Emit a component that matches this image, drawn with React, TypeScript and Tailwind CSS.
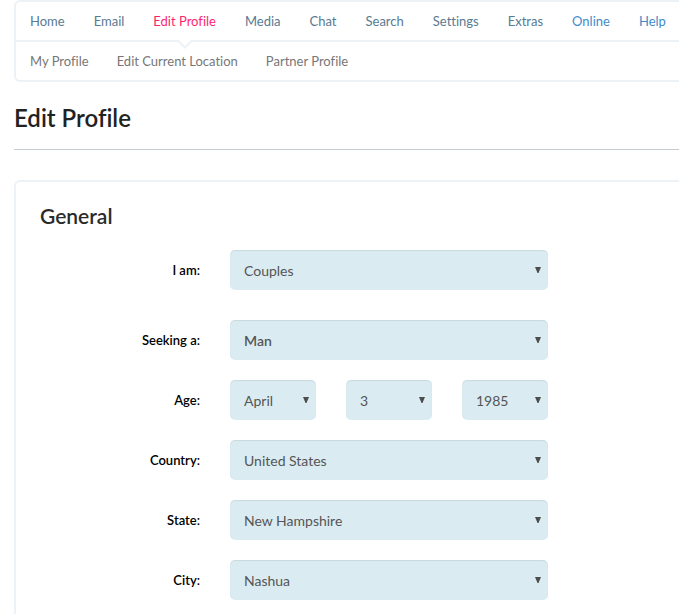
import { clsx } from "clsx";

const mainLinks = [
  { label: "Home", color: "text-[#587a92]" },
  { label: "Email", color: "text-[#587a92]" },
  { label: "Edit Profile", color: "text-[#ff1f71]", active: true },
  { label: "Media", color: "text-[#587a92]" },
  { label: "Chat", color: "text-[#587a92]" },
  { label: "Search", color: "text-[#587a92]" },
  { label: "Settings", color: "text-[#587a92]" },
  { label: "Extras", color: "text-[#587a92]" },
  { label: "Online", color: "text-[#428bca]" },
  { label: "Help", color: "text-[#428bca]" },
];

const subLinks = ["My Profile", "Edit Current Location", "Partner Profile"];

const locationFields = [
  { id: "country", label: "Country:", options: ["United States", "Canada"] },
  { id: "state", label: "State:", options: ["New Hampshire", "Vermont", "Maine"] },
  { id: "city", label: "City:", options: ["Nashua", "Concord", "Manchester"] },
];

function Navigation() {
  return (
    <nav className="rounded-l-md border-2 border-r-0 border-[#edf2f7] text-[13px] whitespace-nowrap">
      <ul className="flex h-10 gap-[29px] border-b-2 border-[#edf2f7] pl-[14px]">
        {mainLinks.map((link) => (
          <li key={link.label} className="relative">
            <a href="#" className={clsx("flex h-[38px] items-center pt-0.5", link.color)} aria-current={link.active ? "page" : undefined}>
              {link.label}
            </a>
            {link.active ? (
              <svg className="absolute top-[38px] left-1/2 h-[9px] w-4 -translate-x-1/2" viewBox="0 0 16 9" aria-hidden="true">
                <path d="M1 0h14L8 7z" fill="#fff" />
                <path d="M0 1h1.500L8 7.500 14.500 1H16" fill="none" stroke="#edf2f7" strokeWidth="2" />
              </svg>
            ) : null}
          </li>
        ))}
      </ul>
      <ul className="flex h-[38px] gap-7 pl-[14px]">
        {subLinks.map((label) => (
          <li key={label}>
            <a href="#" className="flex h-full items-center pt-0.5 text-[#777]">
              {label}
            </a>
          </li>
        ))}
      </ul>
    </nav>
  );
}

function SelectField({ id, label, options, bold }: { id: string; label?: string; options: string[]; bold?: boolean }) {
  return (
    <div className="relative min-w-0 flex-1">
      <select
        id={id}
        aria-label={label}
        className={clsx(
          "block h-10 w-full appearance-none rounded-[5px] bg-[#daecf2] pt-0.5 pr-6 pl-[14px] text-sm text-[#555] shadow-[inset_0_1px_1px_rgba(0,0,0,0.08)]",
          bold && "font-semibold",
        )}
      >
        {options.map((option) => (
          <option key={option}>{option}</option>
        ))}
      </select>
      <svg className="pointer-events-none absolute top-[17px] right-[7px] h-[6px] w-[6px]" viewBox="0 0 6 6" aria-hidden="true">
        <path d="M0 0h6L3.500 6h-1z" fill="#4d4d4d" />
      </svg>
    </div>
  );
}

function FormRow({ htmlFor, label, className, children }: { htmlFor: string; label: string; className?: string; children: React.ReactNode }) {
  return (
    <div className={clsx("flex items-center gap-[30px]", className)}>
      <label htmlFor={htmlFor} className="w-40 shrink-0 pt-0.5 text-right text-[13px] font-semibold text-black">
        {label}
      </label>
      <div className="flex w-full max-w-[318px] gap-[30px]">{children}</div>
    </div>
  );
}

export default function App() {
  return (
    <div className="overflow-hidden bg-white pl-[14px] font-['Lato',sans-serif] [font-variant-ligatures:none]">
      <Navigation />
      <h1 className="border-b border-[#c3cdd3] pt-5 pb-[15px] text-2xl font-semibold text-[#222]">Edit Profile</h1>
      <form className="mt-[30px] rounded-tl-md border-2 border-r-0 border-b-0 border-[#edf2f7] px-6 pt-5 pb-[14px]">
        <h2 className="mb-5 text-[21px] leading-7 font-semibold text-[#2b2b2b]">General</h2>
        <FormRow htmlFor="gender" label="I am:" className="mb-[30px]">
          <SelectField id="gender" options={["Couples", "Man", "Woman"]} />
        </FormRow>
        <div className="flex flex-col gap-5">
          <FormRow htmlFor="seeking" label="Seeking a:">
            <SelectField id="seeking" options={["Man", "Woman", "Couples"]} bold />
          </FormRow>
          <FormRow htmlFor="month" label="Age:">
            <SelectField id="month" options={["April", "May", "June"]} />
            <SelectField id="day" label="Day" options={["3", "4", "5"]} />
            <SelectField id="year" label="Year" options={["1985", "1986", "1987"]} />
          </FormRow>
          {locationFields.map((field) => (
            <FormRow key={field.id} htmlFor={field.id} label={field.label}>
              <SelectField id={field.id} options={field.options} />
            </FormRow>
          ))}
        </div>
      </form>
    </div>
  );
}
